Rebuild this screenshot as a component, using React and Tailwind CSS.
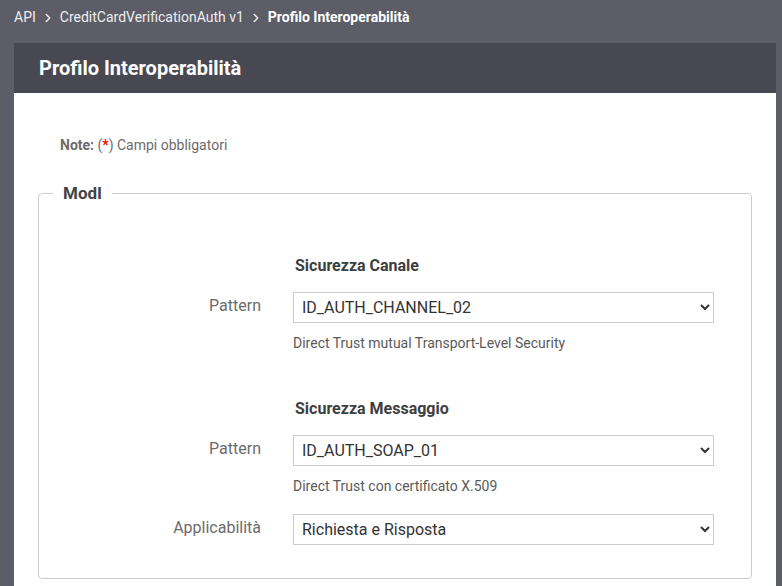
import { ChevronRight } from 'lucide-react';

function Field({ label, value, hint }) {
    return (
        <div className="flex items-start">
            <div className="w-[240px] pt-[2px] pr-[32px] text-right text-[16px] text-[#6b6b6b]">{label}</div>
            <div className="w-[421px]">
                <select
                    defaultValue={value}
                    className="w-full h-[31px] border border-[#cccccc] bg-white pl-[4px] pr-[4px] text-[16px] text-[#333]"
                >
                    <option value={value}>{value}</option>
                </select>
                {hint && <p className="mt-[10px] text-[14px] text-[#5a5a5a]">{hint}</p>}
            </div>
        </div>
    );
}

export default function App() {
    return (
        <div className="min-h-[586px] bg-[#5d5d67] font-['Roboto',sans-serif] overflow-hidden">
            {/* Breadcrumb */}
            <div className="flex items-center h-[35px] px-[14px] text-[14px] text-[#eeeef0]">
                <span>API</span>
                <ChevronRight className="w-[14px] h-[14px] mx-[5px]" strokeWidth={2.5} />
                <span>CreditCardVerificationAuth v1</span>
                <ChevronRight className="w-[14px] h-[14px] mx-[5px]" strokeWidth={2.5} />
                <span className="font-bold text-white">Profilo Interoperabilità</span>
            </div>

            <div className="mt-[8px] ml-[14px] w-[762px]">
                <div className="h-[50px] bg-[#484852] flex items-center px-[25px]">
                    <h1 className="text-[20px] font-bold text-white">Profilo Interoperabilità</h1>
                </div>

                <div className="bg-white px-[24px] pt-[42px] pb-[8px]">
                    <p className="ml-[22px] text-[14px] text-[#6b6b6b]">
                        <span className="font-bold">Note:</span> (<span className="text-[#ff0000] font-bold">*</span>) Campi obbligatori
                    </p>

                    <fieldset className="mt-[25px] border border-[#cccccc] rounded-[4px] px-[14px] pb-[33px]">
                        <legend className="px-[10px] text-[17px] font-bold text-[#444]">ModI</legend>

                        <div className="mt-[47px] ml-[242px] text-[16px] font-bold text-[#3e3e3e]">Sicurezza Canale</div>
                        <div className="mt-[14px]">
                            <Field label="Pattern" value="ID_AUTH_CHANNEL_02" hint="Direct Trust mutual Transport-Level Security" />
                        </div>

                        <div className="mt-[43px] ml-[242px] text-[16px] font-bold text-[#3e3e3e]">Sicurezza Messaggio</div>
                        <div className="mt-[14px]">
                            <Field label="Pattern" value="ID_AUTH_SOAP_01" hint="Direct Trust con certificato X.509" />
                        </div>
                        <div className="mt-[17px]">
                            <Field label="Applicabilità" value="Richiesta e Risposta" />
                        </div>
                    </fieldset>
                </div>
            </div>
        </div>
    );
}
